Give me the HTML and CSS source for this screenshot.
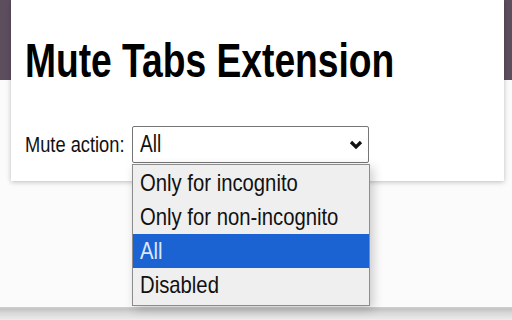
FILE: index.html
```html
<!DOCTYPE html>
<html>
<head>
<meta charset="utf-8">
<link rel="stylesheet" href="styles.css">
</head>
<body>
<div class="page">
  <div class="card">
    <h1 class="title"><span class="cond title-cond">Mute Tabs Extension</span></h1>
    <div class="row">
      <span class="label"><span class="cond">Mute action:</span></span>
      <div class="select">
        <span class="value"><span class="cond">All</span></span>
        <svg class="chev" width="14" height="10" viewBox="0 0 14 10"><path d="M2 2 L7 7 L12 2" fill="none" stroke="#111" stroke-width="3.2"/></svg>
        <div class="list">
          <div class="opt"><span class="cond">Only for incognito</span></div>
          <div class="opt"><span class="cond">Only for non-incognito</span></div>
          <div class="opt sel"><span class="cond">All</span></div>
          <div class="opt"><span class="cond">Disabled</span></div>
        </div>
      </div>
    </div>
  </div>
  <div class="bottom"></div>
</div>
</body>
</html>
```
FILE: styles.css
```css
html, body { margin: 0; padding: 0; }
body {
  width: 512px; height: 320px; overflow: hidden;
  background: linear-gradient(to bottom, #5d4e5e 0, #5d4e5e 80px, #fbfbfb 80px);
  font-family: "Liberation Sans", Arial, sans-serif;
}
.page { position: relative; height: 320px; padding: 0 8px 0 11px; box-sizing: border-box; }
.card {
  background: #fff;
  height: 181px;
  box-shadow: 0 1px 5px rgba(0,0,0,0.25);
  padding: 36px 14px 0 14px;
  box-sizing: border-box;
}
.cond {
  display: inline-block;
  white-space: nowrap;
  transform: scaleX(0.83);
  transform-origin: left center;
}
.title {
  margin: 0;
  font-size: 48px;
  font-weight: bold;
  line-height: 50px;
  color: #000;
  white-space: nowrap;
}
.title-cond { transform: scaleX(0.775); }
.row { display: flex; align-items: center; margin-top: 40px; }
.label { font-size: 22px; color: #111; width: 107px; flex: none; white-space: nowrap; }
.select {
  position: relative;
  width: 237px; height: 37px;
  box-sizing: border-box;
  border: 1px solid #767676;
  border-radius: 2px;
  background: #fff;
  display: flex; align-items: center;
  padding: 0 4px 0 7px;
}
.value { font-size: 23px; color: #111; flex: 1; }
.chev { margin-right: 1px; }
.list {
  position: absolute;
  z-index: 2;
  left: -1px; top: 37px;
  width: 238px;
  box-sizing: border-box;
  border: 1px solid #8c8c8c;
  background: #efefef;
  padding: 1px 0 3px;
  box-shadow: 3px 3px 10px rgba(0,0,0,0.2);
}
.opt { height: 34px; line-height: 34px; font-size: 24px; padding-left: 7px; color: #111; white-space: nowrap; }
.opt .cond { transform: scaleX(0.845); }
.opt.sel { background: #1b63d2; color: #dbe8fb; }
.bottom {
  position: absolute; left: 0; right: 0; top: 307px; height: 13px;
  background: linear-gradient(to bottom, #d0d0d0 0, #c4c4c4 2px, #d8d8d8 6px, #ececec 13px);
}
```
